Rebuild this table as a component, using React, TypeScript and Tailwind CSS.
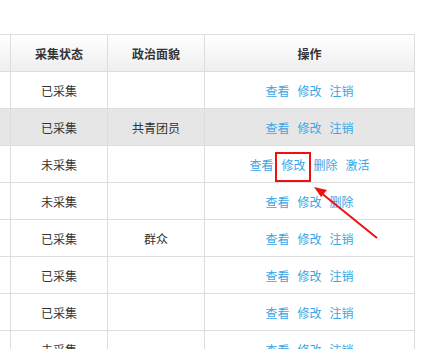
import React from "react";

type Row = { status: string; party: string; actions: string[]; active?: boolean };

const rows: Row[] = [
  { status: "已采集", party: "", actions: ["查看", "修改", "注销"] },
  { status: "已采集", party: "共青团员", actions: ["查看", "修改", "注销"], active: true },
  { status: "未采集", party: "", actions: ["查看", "修改", "删除", "激活"] },
  { status: "未采集", party: "", actions: ["查看", "修改", "删除"] },
  { status: "已采集", party: "群众", actions: ["查看", "修改", "注销"] },
  { status: "已采集", party: "", actions: ["查看", "修改", "注销"] },
  { status: "已采集", party: "", actions: ["查看", "修改", "注销"] },
  { status: "未采集", party: "", actions: ["查看", "修改", "注销"] },
];

const cell = "h-[36px] pt-[2px] flex items-center justify-center border-r border-[#dddddd]";

export default function App() {
  return (
    <div
      className="relative w-[426px] h-[349px] overflow-hidden bg-white text-[12px] text-[#333333]"
      style={{ fontFamily: '"Noto Sans CJK SC", "Microsoft YaHei", sans-serif' }}
    >
      <div className="mt-[34px] w-[415px] border-t border-[#dddddd]">
        {/* header */}
        <div className="flex border-b border-[#dddddd] bg-gradient-to-b from-white to-[#efefef] font-bold">
          <div className={`${cell} w-[11px]`} />
          <div className={`${cell} w-[97px]`}>采集状态</div>
          <div className={`${cell} w-[97px]`}>政治面貌</div>
          <div className={`${cell} w-[210px]`}>操作</div>
        </div>
        {rows.map((r, i) => (
          <div
            key={i}
            className={`flex border-b border-[#dddddd] ${r.active ? "bg-[#e6e6e6]" : "bg-white"}`}
          >
            <div className={`${cell} w-[11px]`} />
            <div className={`${cell} w-[97px]`}>{r.status}</div>
            <div className={`${cell} w-[97px]`}>{r.party}</div>
            <div className={`${cell} w-[210px] gap-[8px]`}>
              {r.actions.map((a) => (
                <a key={a} className="text-[#3aa6e6] cursor-pointer">
                  {a}
                </a>
              ))}
            </div>
          </div>
        ))}
      </div>

      {/* annotation: box + arrow */}
      <div className="absolute left-[275px] top-[152px] w-[36px] h-[30px] border-2 border-[#ee1111]" />
      <svg className="absolute left-0 top-0" width="426" height="349">
        <line x1="377" y1="238" x2="320" y2="192" stroke="#ee1111" strokeWidth="2" />
        <polygon points="314,187 327,190 321,197" fill="#ee1111" />
      </svg>
    </div>
  );
}
